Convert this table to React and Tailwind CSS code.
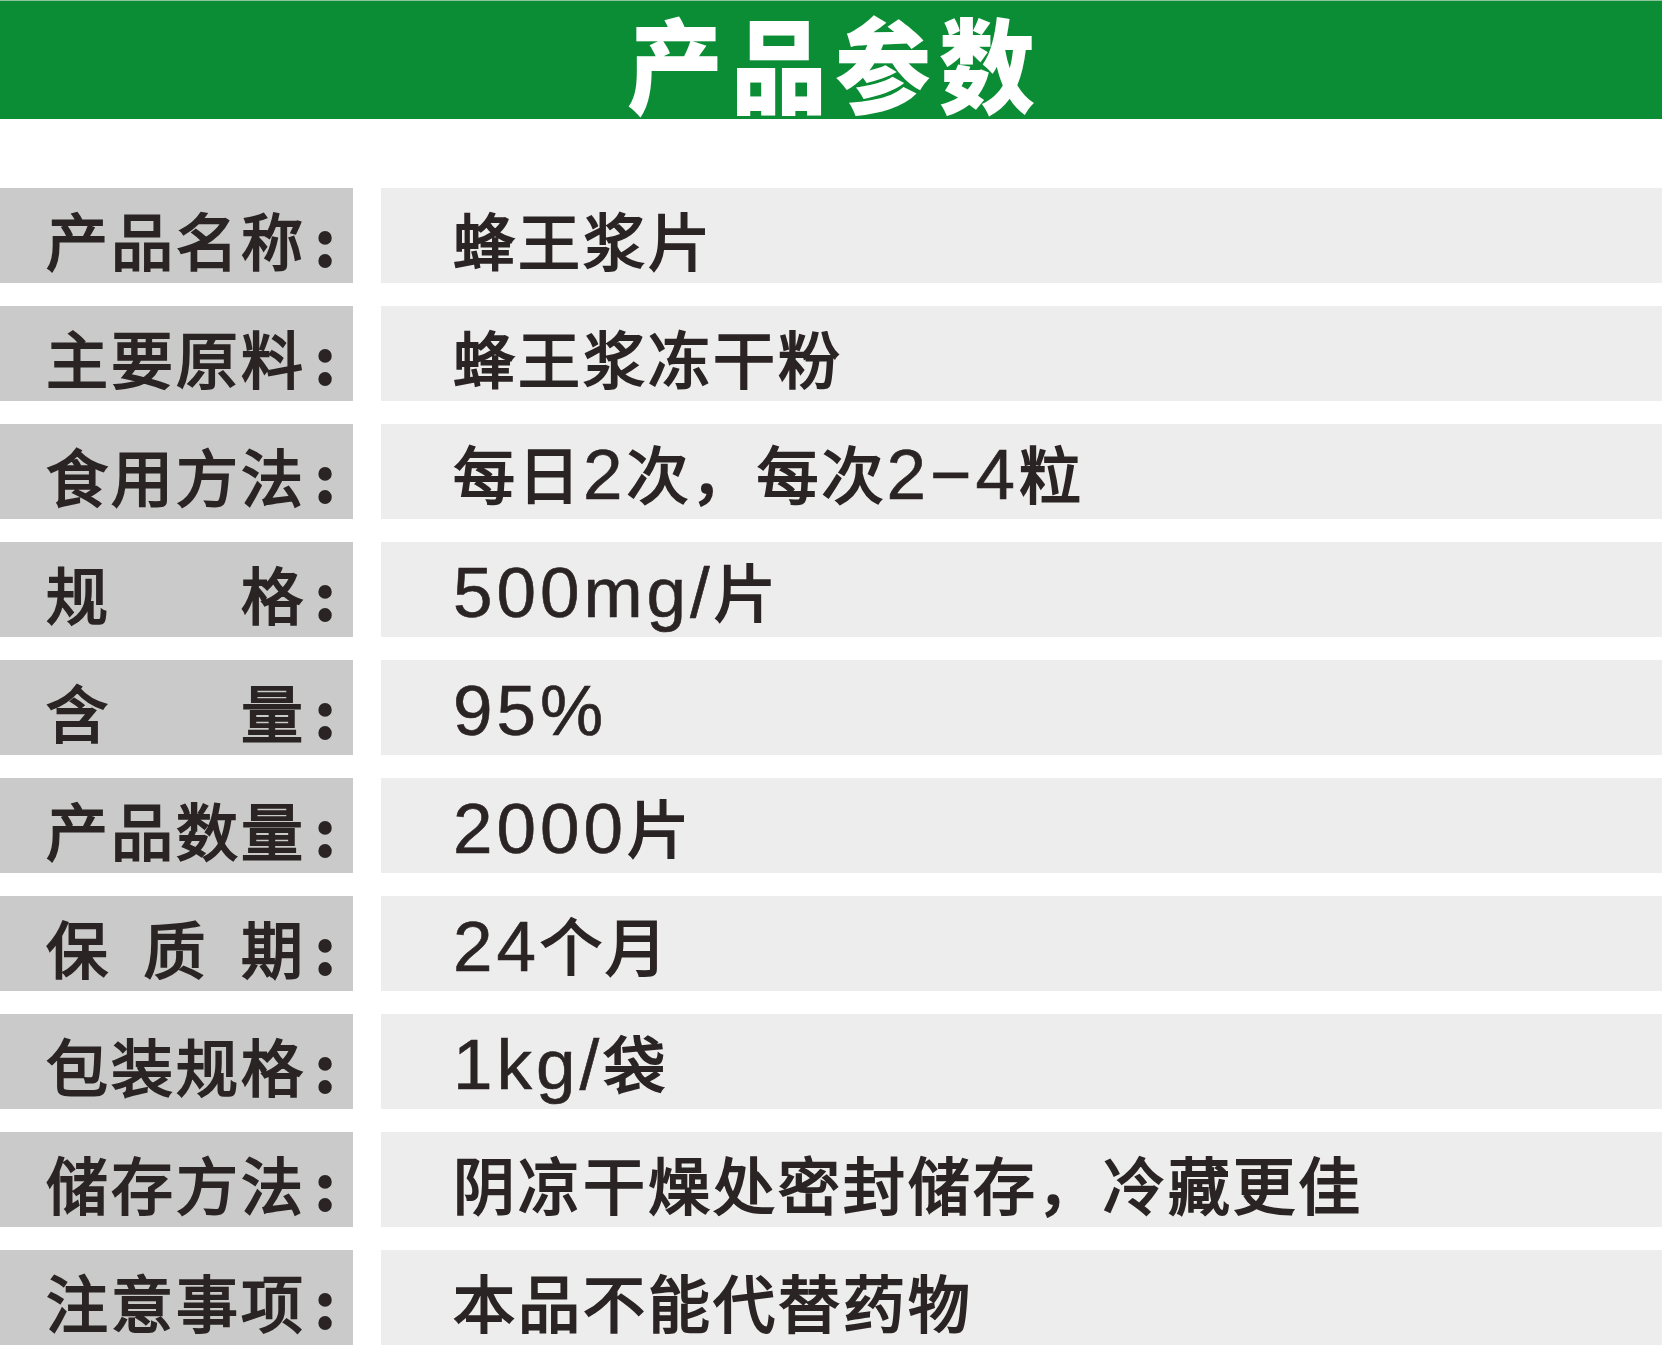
const rows = [
  ['产品名称', '蜂王浆片'],
  ['主要原料', '蜂王浆冻干粉'],
  ['食用方法', '每日2次，每次2−4粒'],
  ['规格', '500mg/片'],
  ['含量', '95%'],
  ['产品数量', '2000片'],
  ['保质期', '24个月'],
  ['包装规格', '1kg/袋'],
  ['储存方法', '阴凉干燥处密封储存，冷藏更佳'],
  ['注意事项', '本品不能代替药物'],
];

// latin runs are set larger in Arial-like face, CJK runs in Noto
function Value({ text }) {
  const parts = text.split(/([0-9A-Za-z%/−]+)/);
  return (
    <div className="whitespace-nowrap leading-none">
      {parts.map((p, i) =>
        i % 2 === 1 ? (
          <span key={i} className="font-['Liberation_Sans',sans-serif] text-[71px] tracking-[4px] [-webkit-text-stroke:0.6px_#2b2425]">
            {p}
          </span>
        ) : (
          <span key={i} className="font-['Noto_Sans_CJK_SC',sans-serif] text-[62px] tracking-[3px] [-webkit-text-stroke:2px_#2b2425]">
            {p}
          </span>
        )
      )}
    </div>
  );
}

export default function App() {
  return (
    <div className="w-[1662px] h-[1346px] bg-white overflow-hidden text-[#2b2425]">
      {/* header bar */}
      <div className="h-[119px] bg-[#0b8d35] border-t border-[#8cc49c] flex items-center justify-center">
        <h1 className="font-['Noto_Sans_CJK_SC',sans-serif] font-black text-white text-[96px] leading-none tracking-[8px] pl-[8px] pt-[4px] scale-y-[1.08]">
          产品参数
        </h1>
      </div>

      <div className="mt-[69px] flex flex-col gap-[23px]">
        {rows.map(([label, value], i) => (
          <div key={i} className="flex h-[95px] gap-[28px]">
            <div className="w-[353px] shrink-0 bg-[#c9cac9] flex items-center pl-[46px] pt-[6px] font-['Noto_Sans_CJK_SC',sans-serif] text-[62px] leading-none [-webkit-text-stroke:2px_#2b2425]">
              <div className="w-[257px] flex justify-between">
                {Array.from(label).map((c, j) => (
                  <span key={j}>{c}</span>
                ))}
              </div>
              <span className="ml-[12px] font-bold">:</span>
            </div>
            <div className="flex-1 bg-[#ededed] flex items-center pl-[72px] pt-[6px]">
              <Value text={value} />
            </div>
          </div>
        ))}
      </div>
    </div>
  );
}
